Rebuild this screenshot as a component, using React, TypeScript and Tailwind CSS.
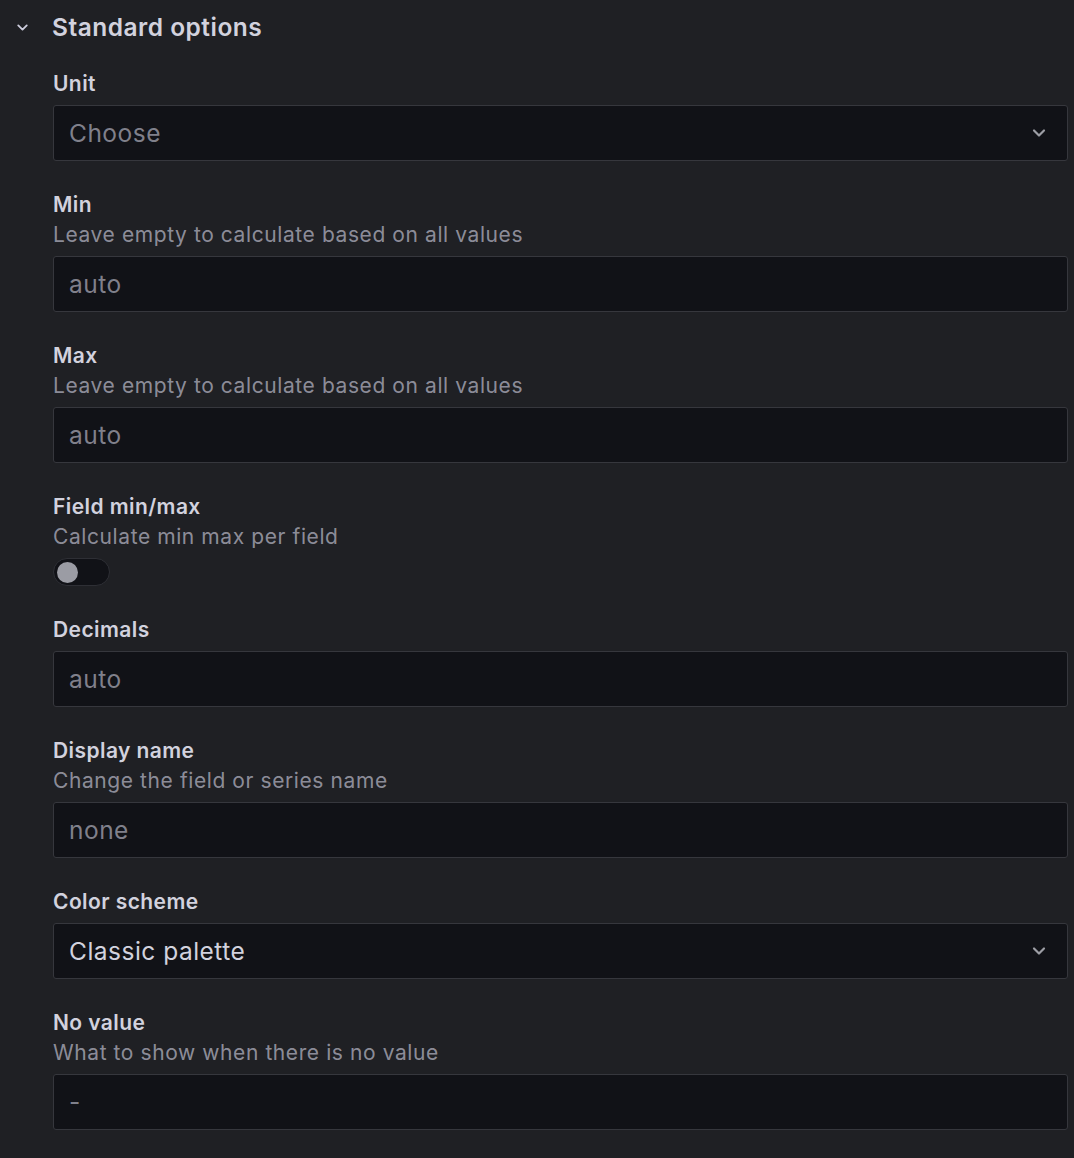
import React from "react";

const Chevron = ({ className }: { className?: string }) => (
  <svg className={className} viewBox="0 0 24 24" fill="none" stroke="currentColor" strokeWidth={2.6} strokeLinecap="round" strokeLinejoin="round">
    <path d="M6 9l6 6 6-6" />
  </svg>
);

const Label = ({ children }: { children: React.ReactNode }) => (
  <div className="text-[21px] leading-[30px] pt-[1px] -mb-[1px] font-semibold tracking-[0.02em] text-[#d2d2de]">{children}</div>
);
const Desc = ({ children }: { children: React.ReactNode }) => (
  <div className="text-[21px] leading-[30px] pt-[1px] -mb-[1px] tracking-[0.028em] text-[rgba(204,204,220,0.65)]">{children}</div>
);

const Input = ({ placeholder }: { placeholder: string }) => (
  <div className="h-[56px] rounded-[3px] border border-[#36373d] bg-[#111217] flex items-center pl-[15px] text-[24.5px] tracking-[0.02em] text-[rgba(204,204,220,0.6)]">
    {placeholder}
  </div>
);

const Select = ({ value, placeholder }: { value: string; placeholder?: boolean }) => (
  <div className="h-[56px] rounded-[3px] border border-[#36373d] bg-[#111217] flex items-center pl-[15px] pr-[18px] justify-between">
    <span className={placeholder ? "text-[24.5px] tracking-[0.02em] text-[rgba(204,204,220,0.6)]" : "text-[24.5px] tracking-[0.02em] text-[#d2d2de]"}>{value}</span>
    <Chevron className="w-[20px] h-[20px] text-[#9d9ea5]" />
  </div>
);

export default function App() {
  return (
    <div className="w-[1074px] h-[1158px] bg-[#1f2024] overflow-hidden" style={{ fontFamily: "Inter, 'Noto Sans', sans-serif" }}>
      <div className="flex items-center h-[54px]">
        <div className="w-[52px] flex justify-center pl-[2px] pr-[10px]">
          <Chevron className="w-[17px] h-[17px] text-[#ccccdc]" />
        </div>
        <div className="text-[24.5px] font-semibold tracking-[0.02em] text-[#d2d2de]">Standard options</div>
      </div>
      <div className="pl-[53px] pr-[6px] pt-[14px] flex flex-col gap-[28px]">
        <div>
          <Label>Unit</Label>
          <div className="mt-[7px]"><Select value="Choose" placeholder /></div>
        </div>
        <div>
          <Label>Min</Label>
          <Desc>Leave empty to calculate based on all values</Desc>
          <div className="mt-[7px]"><Input placeholder="auto" /></div>
        </div>
        <div>
          <Label>Max</Label>
          <Desc>Leave empty to calculate based on all values</Desc>
          <div className="mt-[7px]"><Input placeholder="auto" /></div>
        </div>
        <div>
          <Label>Field min/max</Label>
          <Desc>Calculate min max per field</Desc>
          <div className="mt-[7px] w-[57px] h-[28px] rounded-full border border-[#2e2f35] bg-[#111217] flex items-center pl-[3px]">
            <div className="w-[21px] h-[21px] rounded-full bg-[#9b9ca4]" />
          </div>
        </div>
        <div>
          <Label>Decimals</Label>
          <div className="mt-[7px]"><Input placeholder="auto" /></div>
        </div>
        <div>
          <Label>Display name</Label>
          <Desc>Change the field or series name</Desc>
          <div className="mt-[7px]"><Input placeholder="none" /></div>
        </div>
        <div>
          <Label>Color scheme</Label>
          <div className="mt-[7px]"><Select value="Classic palette" /></div>
        </div>
        <div>
          <Label>No value</Label>
          <Desc>What to show when there is no value</Desc>
          <div className="mt-[7px]"><Input placeholder="-" /></div>
        </div>
      </div>
    </div>
  );
}
